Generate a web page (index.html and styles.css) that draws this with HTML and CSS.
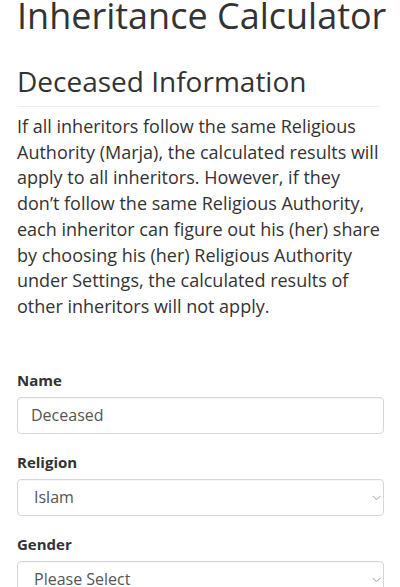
FILE: index.html
```html
<!DOCTYPE html>
<html lang="en">
<head>
<meta charset="utf-8">
<title>Inheritance Calculator</title>
<link rel="stylesheet" href="styles.css">
</head>
<body>
<div class="page">
  <h1 class="title">Inheritance Calculator</h1>
  <h2 class="section-title">Deceased Information</h2>
  <hr class="divider">
  <p class="intro">If all inheritors follow the same Religious Authority (Marja), the calculated results will apply to all inheritors. However, if they don’t follow the same Religious Authority, each inheritor can figure out his (her) share by choosing his (her) Religious Authority under Settings, the calculated results of other inheritors will not apply.</p>
  <form class="form">
    <div class="form-group">
      <label class="label" for="name">Name</label>
      <input class="control" id="name" type="text" value="Deceased">
    </div>
    <div class="form-group">
      <label class="label" for="religion">Religion</label>
      <div class="select-wrap">
        <select class="control select" id="religion">
          <option>Islam</option>
        </select>
        <svg class="chevron" width="9" height="6" viewBox="0 0 9 6"><path d="M0.5 0.8 L4.5 4.8 L8.5 0.8" fill="none" stroke="#9a9a9a" stroke-width="1"/></svg>
      </div>
    </div>
    <div class="form-group">
      <label class="label" for="gender">Gender</label>
      <div class="select-wrap">
        <select class="control select" id="gender">
          <option>Please Select</option>
        </select>
        <svg class="chevron" width="9" height="6" viewBox="0 0 9 6"><path d="M0.5 0.8 L4.5 4.8 L8.5 0.8" fill="none" stroke="#9a9a9a" stroke-width="1"/></svg>
      </div>
    </div>
  </form>
</div>
</body>
</html>
```

FILE: styles.css
```css
html, body {
  margin: 0;
  padding: 0;
  background: #ffffff;
}
body {
  font-family: "Open Sans", "Liberation Sans", sans-serif;
  color: #333333;
}
.page {
  padding: 0 16px 0 17px;
}
.title {
  margin: 0;
  font-size: 36px;
  line-height: 31px;
  font-weight: 400;
  color: #333333;
  white-space: nowrap;
}
.section-title {
  margin: 33px 0 0 0;
  font-size: 28px;
  line-height: 34px;
  font-weight: 400;
  color: #333333;
}
.divider {
  margin: 8px 4px 0 0;
  border: 0;
  border-top: 1px solid #eeeeee;
  height: 0;
}
.intro {
  margin: 7px 0 0 0;
  font-size: 18px;
  line-height: 25.714px;
  color: #333333;
}
.form {
  margin-top: 50px;
  display: flex;
  flex-direction: column;
  gap: 18px;
}
.form-group {
  display: flex;
  flex-direction: column;
}
.label {
  font-size: 15px;
  line-height: 20px;
  font-weight: 700;
  color: #333333;
  margin-bottom: 7px;
}
.control {
  box-sizing: border-box;
  width: 100%;
  height: 37px;
  margin: 0;
  padding: 7px 13px;
  font-family: "Open Sans", "Liberation Sans", sans-serif;
  font-size: 16px;
  line-height: 21px;
  color: #555555;
  background: #ffffff;
  border: 1px solid #d6d6d6;
  border-radius: 4px;
  box-shadow: inset 0 1px 1px rgba(0,0,0,0.04);
  outline: none;
}
.select-wrap {
  position: relative;
}
.select {
  -webkit-appearance: none;
  appearance: none;
  padding-left: 16px;
}
.chevron {
  position: absolute;
  right: 3px;
  top: 16px;
  pointer-events: none;
}
```
